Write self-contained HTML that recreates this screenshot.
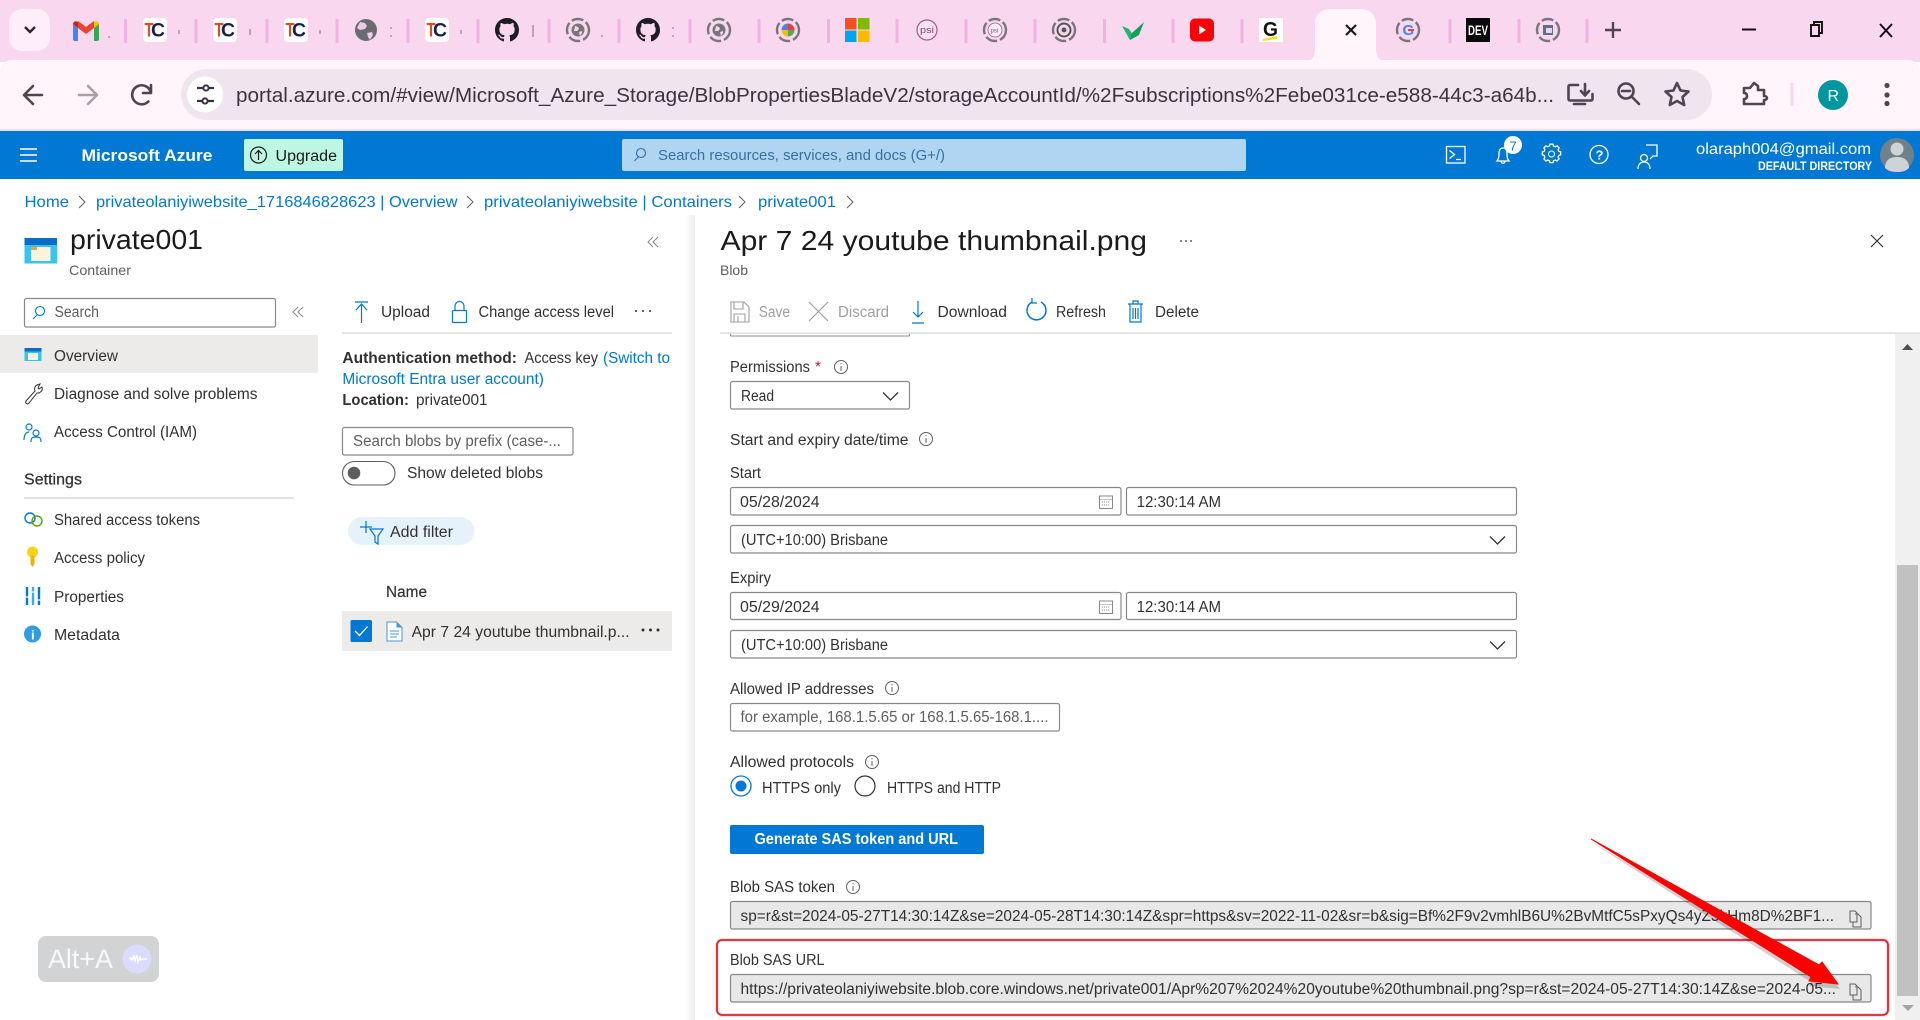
<!DOCTYPE html>
<html lang="en"><head><meta charset="utf-8"><title>Azure Portal</title>
<style>
html,body{margin:0;padding:0;width:1920px;height:1020px;overflow:hidden;background:#fff}
svg{display:block;font-family:"Liberation Sans",Arial,sans-serif}
text{white-space:pre}
.t{font-size:15.5px;fill:#323130}
.l{font-size:16px;fill:#0078d4}
.g{font-size:15.5px;fill:#605e5c}
.d{font-size:15.5px;fill:#a19f9d}
.b{font-size:15.5px;fill:#323130;font-weight:700}
.box{fill:#fff;stroke:#8a8886;stroke-width:1.2}
.ib{fill:none;stroke:#0078d4;stroke-width:1.2}
.ik{fill:none;stroke:#4f4450;stroke-width:2.6;stroke-linecap:round;stroke-linejoin:round}
.iw{fill:none;stroke:#fff;stroke-width:1.3}
.sep{stroke:#f2b1e3;stroke-width:3}
.ring{fill:none;stroke:#77777b;stroke-width:2.4;stroke-dasharray:12 3}
.info{fill:none;stroke:#605e5c;stroke-width:1}
.chev{fill:none;stroke:#323130;stroke-width:1.3}
</style></head><body>
<svg width="1920" height="1020" viewBox="0 0 1920 1020" xmlns="http://www.w3.org/2000/svg">
<rect width="1920" height="1020" fill="#fff"/>
<!-- tab strip -->
<rect width="1920" height="62" fill="#f8d7ef"/>
<rect x="9" y="9" width="41" height="42" rx="13" fill="#fdeef9"/>
<path d="M25 27l5 5 5-5" fill="none" stroke="#2d2530" stroke-width="2.4"/>
<!-- separators -->
<g class="sep"><path d="M125.500 19v24M196 19v24M267 19v24M337 19v24M408 19v24M478 19v24M549 19v24M619 19v24M690 19v24M759 19v24M828.500 19v24M897 19v24M966 19v24M1035 19v24M1104.500 19v24M1173 19v24M1242 19v24M1450 19v24M1519 19v24M1587 19v24"/></g>
<!-- tiny clipped tab marks -->
<path d="M109 36v2M179 30v4M250 29v6M320 30v4M391 27v2M391 35v2M461 30v4M533 25v12M602 35v2M673 27v2M673 35v2" stroke="#77707a" stroke-width="1"/>
<!-- gmail -->
<g transform="translate(73,19)">
<path d="M0 5v15a2 2 0 002 2h3V9z" fill="#4285f4"/><path d="M21 9v13h3a2 2 0 002-2V5z" fill="#34a853"/>
<path d="M5 9l8 6 8-6V2l-8 6-8-6z" fill="#ea4335"/><path d="M0 5a3 3 0 015-2v6z" fill="#c5221f"/><path d="M26 5a3 3 0 00-5-2v6z" fill="#fbbc04"/></g>
<!-- TC -->
<g font-weight="700" font-size="19">
<rect x="143" y="18" width="24" height="24" rx="4" fill="#fff"/><text x="144.500" y="36.500" fill="#e8481c" textLength="9" lengthAdjust="spacingAndGlyphs">T</text><text x="151" y="36.500" fill="#16204f" textLength="14" lengthAdjust="spacingAndGlyphs">C</text>
<rect x="213" y="18" width="24" height="24" rx="4" fill="#fff"/><text x="214.500" y="36.500" fill="#e8481c" textLength="9" lengthAdjust="spacingAndGlyphs">T</text><text x="221" y="36.500" fill="#16204f" textLength="14" lengthAdjust="spacingAndGlyphs">C</text>
<rect x="284" y="18" width="24" height="24" rx="4" fill="#fff"/><text x="285.500" y="36.500" fill="#e8481c" textLength="9" lengthAdjust="spacingAndGlyphs">T</text><text x="292" y="36.500" fill="#16204f" textLength="14" lengthAdjust="spacingAndGlyphs">C</text>
<rect x="425" y="18" width="24" height="24" rx="4" fill="#fff"/><text x="426.500" y="36.500" fill="#e8481c" textLength="9" lengthAdjust="spacingAndGlyphs">T</text><text x="433" y="36.500" fill="#16204f" textLength="14" lengthAdjust="spacingAndGlyphs">C</text>
</g>
<!-- globe -->
<circle cx="366" cy="30" r="11" fill="#6a6a70"/><path d="M360 22l5 1 2 3-2 3-5 1-3-2zM367 33l5-1 1 3-3 5-2-3z" fill="#f8d7ef" opacity=".9"/>
<!-- github -->
<path transform="translate(495,18) scale(1.5)" fill="#1b1f23" fill-rule="evenodd" d="M8 0C3.58 0 0 3.58 0 8c0 3.54 2.29 6.53 5.47 7.59.4.07.55-.17.55-.38 0-.19-.01-.82-.01-1.49-2.01.37-2.53-.49-2.69-.94-.09-.23-.48-.94-.82-1.13-.28-.15-.68-.52-.01-.53.63-.01 1.08.58 1.23.82.72 1.21 1.87.87 2.33.66.07-.52.28-.87.51-1.07-1.78-.2-3.64-.89-3.64-3.95 0-.87.31-1.59.82-2.15-.08-.2-.36-1.02.08-2.12 0 0 .67-.21 2.2.82.64-.18 1.32-.27 2-.27.68 0 1.36.09 2 .27 1.53-1.04 2.2-.82 2.2-.82.44 1.1.16 1.92.08 2.12.51.56.82 1.27.82 2.15 0 3.07-1.87 3.75-3.65 3.95.29.25.54.73.54 1.48 0 1.07-.01 1.93-.01 2.2 0 .21.15.46.55.38A8.013 8.013 0 0016 8c0-4.42-3.58-8-8-8z"/>
<path transform="translate(636,18) scale(1.5)" fill="#1b1f23" fill-rule="evenodd" d="M8 0C3.58 0 0 3.58 0 8c0 3.54 2.29 6.53 5.47 7.59.4.07.55-.17.55-.38 0-.19-.01-.82-.01-1.49-2.01.37-2.53-.49-2.69-.94-.09-.23-.48-.94-.82-1.13-.28-.15-.68-.52-.01-.53.63-.01 1.08.58 1.23.82.72 1.21 1.87.87 2.33.66.07-.52.28-.87.51-1.07-1.78-.2-3.64-.89-3.64-3.95 0-.87.31-1.59.82-2.15-.08-.2-.36-1.02.08-2.12 0 0 .67-.21 2.2.82.64-.18 1.32-.27 2-.27.68 0 1.36.09 2 .27 1.53-1.04 2.2-.82 2.2-.82.44 1.1.16 1.92.08 2.12.51.56.82 1.27.82 2.15 0 3.07-1.87 3.75-3.65 3.95.29.25.54.73.54 1.48 0 1.07-.01 1.93-.01 2.2 0 .21.15.46.55.38A8.013 8.013 0 0016 8c0-4.42-3.58-8-8-8z"/>
<!-- loading-ringed favicons -->
<circle cx="578" cy="30" r="11" class="ring"/><circle cx="578" cy="30" r="6.500" fill="#77777b"/><path d="M575 26l3 1 1 2-2 2-3 0zM579 32l3-1 0 2-2 3z" fill="#f8d7ef"/>
<circle cx="719" cy="30" r="11" class="ring"/><circle cx="719" cy="30" r="6.500" fill="#77777b"/><path d="M716 26l3 1 1 2-2 2-3 0zM720 32l3-1 0 2-2 3z" fill="#f8d7ef"/>
<circle cx="788" cy="30" r="11" class="ring"/><path d="M788 30V23.500a6.500 6.500 0 016.500 6.500z" fill="#ea4335"/><path d="M788 30h6.500a6.500 6.500 0 01-6.500 6.500z" fill="#4caf50"/><path d="M788 30v6.500a6.500 6.500 0 01-6.500-6.500z" fill="#fbbc04"/><path d="M788 30h-6.500a6.500 6.500 0 016.500-6.500z" fill="#4285f4"/>
<rect x="845" y="18" width="11.500" height="11.500" fill="#f25022"/><rect x="858" y="18" width="11.500" height="11.500" fill="#7fba00"/><rect x="845" y="30.500" width="11.500" height="11.500" fill="#00a4ef"/><rect x="858" y="30.500" width="11.500" height="11.500" fill="#ffb900"/>
<circle cx="927" cy="30" r="10" fill="#f8e3f2" stroke="#a8558f" stroke-width="1.200"/><text x="920" y="33" font-size="9" fill="#8a3a78" textLength="14" lengthAdjust="spacingAndGlyphs">psi</text>
<circle cx="995" cy="30" r="11" class="ring"/><circle cx="995" cy="30" r="7" fill="#fbeff8" stroke="#a8558f" stroke-width=".8"/><text x="990.500" y="32.500" font-size="6" fill="#8a3a78">psi</text>
<circle cx="1064" cy="30" r="11" class="ring"/><circle cx="1064" cy="30" r="6.500" fill="#f8d7ef" stroke="#55555a" stroke-width="2"/><circle cx="1064" cy="30" r="2.500" fill="#55555a"/>
<path d="M1122 26l7 3 4 6-3 5z" fill="#22b573"/><path d="M1130 40l2-7 12-11-5 13z" fill="#10a05a"/>
<rect x="1190" y="18.500" width="24" height="23" rx="5" fill="#ff0000"/><path d="M1199 25.500l7 4.500-7 4.500z" fill="#fff"/>
<rect x="1259" y="18" width="24" height="24" fill="#fff"/><text x="1263" y="36" font-size="20" font-weight="700" fill="#111" textLength="15" lengthAdjust="spacingAndGlyphs">G</text><path d="M1263 39l14-3v3l-14 2z" fill="#f5e11d"/>
<!-- active tab -->
<path d="M1303 62c8 0 12-4 12-14V24c0-9 6-15 15-15h31c9 0 15 6 15 15v24c0 10 4 14 12 14z" fill="#fff5fb"/>
<path d="M1346 25l10 10m0-10l-10 10" stroke="#1d1720" stroke-width="2.200" fill="none"/>
<circle cx="1408" cy="30" r="11" class="ring"/><text x="1402.500" y="35" font-size="15" font-weight="700" fill="#4285f4">G</text><path d="M1408 29h6v2h-6z" fill="#ea4335"/>
<rect x="1466" y="18" width="24" height="24" fill="#0a0a0a"/><text x="1468" y="35" font-size="13.500" font-weight="700" fill="#fff" textLength="20" lengthAdjust="spacingAndGlyphs">DEV</text>
<circle cx="1548" cy="30" r="11" class="ring"/><rect x="1543" y="25" width="10" height="10" fill="#5b6f8f"/><rect x="1546" y="28" width="6" height="5" fill="#e9d6ec"/>
<path d="M1613 22v16M1605 30h16" stroke="#4f4450" stroke-width="2.400"/>
<!-- window controls -->
<path d="M1742 29.500h14" stroke="#111" stroke-width="2"/>
<path d="M1811 25h8v11h-8zM1814 25v-3h8v11h-3" fill="none" stroke="#111" stroke-width="1.900"/>
<path d="M1880 24l12 13m0-13l-12 13" stroke="#111" stroke-width="2"/>
<!-- toolbar -->
<path d="M0 129V72a12 12 0 0112-12h1896a12 12 0 0112 12v57z" fill="#fff5fb"/>
<path d="M1303 62h100" stroke="#fff5fb" stroke-width="3"/>
<rect y="129" width="1920" height="2" fill="#f0dce8"/>
<rect x="181" y="69" width="1531" height="51" rx="25.500" fill="#efe5ee"/>
<circle cx="205" cy="94.500" r="18" fill="#fff"/>
<path d="M197 88h6M209 88h5M197 101h5M208 101h6" stroke="#3a3040" stroke-width="2.200"/><circle cx="206" cy="88" r="2.600" fill="none" stroke="#3a3040" stroke-width="2"/><circle cx="205" cy="101" r="2.600" fill="none" stroke="#3a3040" stroke-width="2"/>
<path d="M42 95H25M33 86l-9 9 9 9" class="ik"/>
<path d="M79 95h17M88 86l9 9-9 9" class="ik" style="stroke:#a9a0a8"/>
<path d="M151 93a9.500 9.500 0 10-2.600 8.500M151 85v8h-8" class="ik"/>
<text x="236" y="102" font-size="20.500" fill="#3b3340" textLength="1318" lengthAdjust="spacingAndGlyphs">portal.azure.com/#view/Microsoft_Azure_Storage/BlobPropertiesBladeV2/storageAccountId/%2Fsubscriptions%2Febe031ce-e588-44c3-a64b...</text>
<path d="M1578 85h-8a1.500 1.500 0 00-1.500 1.500V99a1.500 1.500 0 001.500 1.500h21a1.500 1.500 0 001.500-1.500v-5" class="ik"/><path d="M1574 104h11" class="ik"/><path d="M1585 84v11M1581 91l4 4.500 4-4.500" class="ik"/>
<circle cx="1626" cy="91" r="7.500" class="ik"/><path d="M1622 91h8M1632 97l7 7" class="ik"/>
<path d="M1677 83l3.500 7.500 8 1-6 5.500 1.700 8-7.200-4-7.200 4 1.700-8-6-5.500 8-1z" class="ik"/>
<path d="M1744 88h6l4-5 4 3v4h6v6c2 0 3 1 3 2s-1 2-3 2v4h-20v-5c2 0 3-1 3-3s-1-3-3-3z" class="ik"/>
<path d="M1792 83v23" stroke="#f8d7ef" stroke-width="3"/>
<circle cx="1833" cy="95" r="15" fill="#00969f"/><text x="1827.500" y="101" font-size="16" fill="#fff">R</text>
<circle cx="1887" cy="85.500" r="2.600" fill="#4f4450"/><circle cx="1887" cy="95" r="2.600" fill="#4f4450"/><circle cx="1887" cy="103.500" r="2.600" fill="#4f4450"/>
<!-- azure header -->
<rect y="131" width="1920" height="48" fill="#0078d4"/>
<path d="M20 149h17M20 155h17M20 161h17" stroke="#fff" stroke-width="1.500"/>
<text x="81.500" y="161" font-size="17" font-weight="700" fill="#fff" textLength="131" lengthAdjust="spacingAndGlyphs">Microsoft Azure</text>
<rect x="244" y="139" width="99" height="32" rx="2" fill="#bdf7e4"/>
<circle cx="258.500" cy="155" r="8" fill="none" stroke="#1b1a19" stroke-width="1.200"/><path d="M258.500 160v-9M255 154l3.500-3.500 3.500 3.500" fill="none" stroke="#1b1a19" stroke-width="1.200"/>
<text x="275.500" y="161" font-size="15.500" fill="#1b1a19" textLength="61.500" lengthAdjust="spacingAndGlyphs">Upgrade</text>
<rect x="622" y="139" width="624" height="32" rx="2" fill="#b0d5f2"/>
<circle cx="641" cy="153" r="4.500" fill="none" stroke="#2f6ea5" stroke-width="1.100"/><path d="M638 157l-3.500 4" stroke="#2f6ea5" stroke-width="1.100"/>
<text x="658" y="160" font-size="14.500" fill="#3a6f9d" textLength="287" lengthAdjust="spacingAndGlyphs">Search resources, services, and docs (G+/)</text>
<rect x="1446.500" y="146.500" width="18.500" height="16.500" class="iw"/><path d="M1449.500 150.500l5 4-5 4M1456 159.500h5" class="iw"/>
<path d="M1497 161c1-1 2-3 2-7 0-4 1-6 4-6s4 2 4 6c0 4 1 6 2 7zM1501 161c0 3 4 3 4 0" class="iw"/>
<circle cx="1513" cy="145" r="9" fill="#fff"/><text x="1509.500" y="150.500" font-size="13" fill="#0078d4">7</text>
<g transform="translate(1551.500,154) scale(.76) translate(-1551.500,-158)"><circle cx="1551.500" cy="158" r="4" class="iw" stroke-width="1.600"/><path d="M1549.500 145h4l.7 2.500 2.300 1 2.300-1.300 2.700 2.700-1.300 2.300 1 2.300 2.300.7v4l-2.300.7-1 2.300 1.300 2.300-2.700 2.700-2.300-1.300-2.300 1-.7 2.500h-4l-.7-2.500-2.300-1-2.300 1.300-2.700-2.700 1.300-2.300-1-2.300-2.300-.7v-4l2.300-.7 1-2.300-1.300-2.300 2.700-2.700 2.300 1.300 2.300-1z" class="iw" style="stroke-width:1.700"/></g>
<circle cx="1599" cy="154.500" r="9" class="iw"/><text x="1595.500" y="159.500" font-size="13" font-weight="700" fill="#fff">?</text>
<path d="M1646 145h11v11h-4l-3 3" class="iw"/><circle cx="1644" cy="158" r="3.500" class="iw"/><path d="M1638 169c0-4 2-7 6-7s6 3 6 7" class="iw"/>
<text x="1696" y="154" font-size="16" fill="#fff" textLength="175" lengthAdjust="spacingAndGlyphs">olaraph004@gmail.com</text>
<text x="1758" y="170" font-size="11.500" font-weight="700" fill="#fff" textLength="114" lengthAdjust="spacingAndGlyphs">DEFAULT DIRECTORY</text>
<circle cx="1897" cy="155" r="17" fill="#71818c"/><circle cx="1897" cy="149" r="6.500" fill="#cdd3d7"/><path d="M1885 168c0-8 5-11 12-11s12 3 12 11c-3 3-7 4-12 4s-9-1-12-4z" fill="#cdd3d7"/>
<!-- blade shadow -->
<defs><linearGradient id="sh" x1="0" x2="1"><stop offset="0" stop-color="#fff"/><stop offset="1" stop-color="#ececec"/></linearGradient></defs>
<rect x="685" y="215" width="10" height="805" fill="url(#sh)"/>
<!-- breadcrumb -->
<text x="24.500" y="207" class="l" textLength="44.500" lengthAdjust="spacingAndGlyphs">Home</text>
<path d="M79 196l6 6-6 6M467 196l6 6-6 6M739 196l6 6-6 6M847 196l6 6-6 6" fill="none" stroke="#605e5c" stroke-width="1"/>
<text x="96" y="207" class="l" textLength="361.500" lengthAdjust="spacingAndGlyphs">privateolaniyiwebsite_1716846828623 | Overview</text>
<text x="484" y="207" class="l" textLength="248" lengthAdjust="spacingAndGlyphs">privateolaniyiwebsite | Containers</text>
<text x="758" y="207" class="l" textLength="78" lengthAdjust="spacingAndGlyphs">private001</text>
<!-- left blade header -->
<rect x="24.500" y="238" width="32.500" height="25.500" fill="#32c6f0"/><rect x="24.500" y="238" width="32.500" height="7" fill="#0b6cc6"/><rect x="31" y="247" width="19.500" height="14" fill="#fff3dd"/><rect x="31" y="247" width="6" height="3" fill="#f0a030"/>
<text x="70" y="249" font-size="28" fill="#1b1a19" textLength="133" lengthAdjust="spacingAndGlyphs">private001</text>
<text x="69" y="275" font-size="14" fill="#605e5c" textLength="62" lengthAdjust="spacingAndGlyphs">Container</text>
<path d="M653 237l-5 5 5 5M658 237l-5 5 5 5" fill="none" stroke="#8a8886" stroke-width="1"/>
<!-- sidebar -->
<rect x="24.500" y="298.500" width="251" height="28.500" rx="2" class="box"/>
<circle cx="40" cy="311" r="4.500" fill="none" stroke="#0078d4" stroke-width="1.100"/><path d="M37 315l-4 4" stroke="#0078d4" stroke-width="1.100"/>
<text x="54.500" y="317" class="g" textLength="44.500" lengthAdjust="spacingAndGlyphs">Search</text>
<path d="M298 307l-5 5 5 5M303 307l-5 5 5 5" fill="none" stroke="#8a8886" stroke-width="1"/>
<rect y="335" width="318" height="38" fill="#edebe9"/>
<rect x="24.500" y="348" width="17" height="13" fill="#32c6f0"/><rect x="24.500" y="348" width="17" height="3.500" fill="#0b6cc6"/><rect x="28" y="353" width="10" height="7" fill="#fff3dd"/>
<text x="54" y="361" class="t" textLength="64" lengthAdjust="spacingAndGlyphs">Overview</text>
<path d="M26 401l9-10c-1-3 0-5 2-6l3-1-2 4 1 1 3-2c1 3-1 5-3 6l-2 0-8 10c-2 2-4 0-3-2z" fill="none" stroke="#323130" stroke-width="1"/>
<text x="54" y="399" class="t" textLength="203.500" lengthAdjust="spacingAndGlyphs">Diagnose and solve problems</text>
<circle cx="29" cy="427" r="3" class="ib"/><circle cx="36" cy="433" r="3" class="ib"/><path d="M24 440c0-5 2-8 5-8M31 442c0-4 1-5 5-5s5 1 5 5" class="ib"/>
<text x="54" y="437" class="t" textLength="143" lengthAdjust="spacingAndGlyphs">Access Control (IAM)</text>
<text x="24" y="484.500" font-size="15.500" stroke="#323130" stroke-width=".25" fill="#323130" textLength="58" lengthAdjust="spacingAndGlyphs">Settings</text>
<rect x="24" y="497.500" width="270" height="1" fill="#c8c6c4"/>
<circle cx="30" cy="518" r="5" fill="none" stroke="#0078d4" stroke-width="1.400"/><circle cx="37" cy="521" r="5" fill="none" stroke="#57a300" stroke-width="1.400"/>
<text x="54" y="525" class="t" textLength="146" lengthAdjust="spacingAndGlyphs">Shared access tokens</text>
<circle cx="32.500" cy="552" r="5.500" fill="#fcd116"/><path d="M30.500 556h4v8l-2 3-2-3z" fill="#f5b000"/>
<text x="54" y="563" class="t" textLength="91" lengthAdjust="spacingAndGlyphs">Access policy</text>
<path d="M27 587v18" stroke="#0078d4" stroke-width="2.400"/><path d="M33 587v18" stroke="#32b0ec" stroke-width="2.400"/><path d="M39 587v18" stroke="#0078d4" stroke-width="2.400"/><path d="M25 597h4M31 592h4M37 600h4" stroke="#fff" stroke-width="1.300"/>
<text x="54" y="602" class="t" textLength="70" lengthAdjust="spacingAndGlyphs">Properties</text>
<circle cx="32.500" cy="634" r="8.500" fill="#2f9ce6"/><text x="31" y="639.500" font-size="13" font-weight="700" fill="#fff">i</text>
<text x="54" y="640" class="t" textLength="66" lengthAdjust="spacingAndGlyphs">Metadata</text>
<!-- middle column -->
<path d="M355 302h13M361.500 323v-19M356 310l5.500-6 5.500 6" fill="none" stroke="#0078d4" stroke-width="1.200"/>
<text x="381" y="317" class="t" textLength="49" lengthAdjust="spacingAndGlyphs">Upload</text>
<rect x="452.500" y="310.500" width="14" height="12" rx="1" class="ib"/><path d="M455 310v-4a4.500 4.500 0 019 0v4" class="ib"/>
<text x="478.500" y="317" class="t" textLength="135.500" lengthAdjust="spacingAndGlyphs">Change access level</text>
<circle cx="636" cy="311" r="1" fill="#323130"/><circle cx="643" cy="311" r="1" fill="#323130"/><circle cx="650" cy="311" r="1" fill="#323130"/>
<rect x="342" y="332.500" width="330" height="1.200" fill="#d6d6d6"/>
<text x="342.400" y="363" class="b" textLength="174.500" lengthAdjust="spacingAndGlyphs">Authentication method:</text>
<text x="524.500" y="363" class="t" textLength="73.500" lengthAdjust="spacingAndGlyphs">Access key</text>
<text x="603" y="363" font-size="15.500" fill="#0078d4" textLength="67" lengthAdjust="spacingAndGlyphs">(Switch to</text>
<text x="342.400" y="384" font-size="15.500" fill="#0078d4" textLength="201.500" lengthAdjust="spacingAndGlyphs">Microsoft Entra user account)</text>
<text x="342.400" y="405" class="b" textLength="66.500" lengthAdjust="spacingAndGlyphs">Location:</text>
<text x="416" y="405" class="t" textLength="71.500" lengthAdjust="spacingAndGlyphs">private001</text>
<rect x="342.500" y="427.500" width="230.500" height="27.500" rx="2" class="box"/>
<text x="353" y="446" class="g" textLength="208" lengthAdjust="spacingAndGlyphs">Search blobs by prefix (case-...</text>
<rect x="342.500" y="461.500" width="52.500" height="23.500" rx="11.750" fill="#fff" stroke="#605e5c" stroke-width="1.100"/><circle cx="354" cy="473" r="6.300" fill="#605e5c"/>
<text x="407" y="478" class="t" textLength="136" lengthAdjust="spacingAndGlyphs">Show deleted blobs</text>
<rect x="348" y="517" width="126.500" height="28" rx="14" fill="#e6f2fb"/>
<path d="M366 521v12M360 527h12" stroke="#0078d4" stroke-width="1.200"/><path d="M370 529h13l-5 7v8l-3-2v-6z" fill="none" stroke="#0078d4" stroke-width="1.200"/>
<text x="390" y="537" class="t" textLength="63" lengthAdjust="spacingAndGlyphs">Add filter</text>
<text x="386" y="597" font-size="15.500" fill="#323130" stroke="#323130" stroke-width=".2" textLength="41" lengthAdjust="spacingAndGlyphs">Name</text>
<rect x="342" y="611" width="330" height="40" fill="#edebe9"/>
<rect x="350.500" y="620" width="21.500" height="22" rx="1.500" fill="#0078d4"/><path d="M355 631l4.500 4.500 8-9" fill="none" stroke="#fff" stroke-width="1.300"/>
<path d="M387 622h9.500l5.500 5.500V641h-15z" fill="#fff" stroke="#4a95d6" stroke-width="1"/><path d="M396.500 622v5.500h5.500z" fill="#4a95d6"/><path d="M390 631h9M390 634h9M390 637h7" stroke="#4a95d6" stroke-width="1"/>
<text x="411.600" y="637" class="t" textLength="218" lengthAdjust="spacingAndGlyphs">Apr 7 24 youtube thumbnail.p...</text>
<circle cx="643" cy="630" r="1.500" fill="#323130"/><circle cx="650.500" cy="630" r="1.500" fill="#323130"/><circle cx="658" cy="630" r="1.500" fill="#323130"/>
<!-- right blade header -->
<text x="720.500" y="250" font-size="28" fill="#1b1a19" textLength="426.500" lengthAdjust="spacingAndGlyphs">Apr 7 24 youtube thumbnail.png</text>
<circle cx="1181" cy="241" r=".9" fill="#323130"/><circle cx="1186" cy="241" r=".9" fill="#323130"/><circle cx="1191" cy="241" r=".9" fill="#323130"/>
<path d="M1871 235l12 12m0-12l-12 12" stroke="#323130" stroke-width="1.200"/>
<text x="720" y="275" font-size="14" fill="#605e5c" textLength="28" lengthAdjust="spacingAndGlyphs">Blob</text>
<!-- right toolbar -->
<path d="M731 302h13l5 5v15h-18zM734 302v7h9v-7M734 322v-8h11v8M738 316v6" fill="none" stroke="#a19f9d" stroke-width="1.100"/>
<text x="758.700" y="317" class="d" textLength="31.300" lengthAdjust="spacingAndGlyphs">Save</text>
<path d="M809 302l19 19m0-19l-19 19" stroke="#a19f9d" stroke-width="1.200"/>
<text x="838" y="317" class="d" textLength="51" lengthAdjust="spacingAndGlyphs">Discard</text>
<path d="M918 301v16M913 312l5 5 5-5M912 323h12" fill="none" stroke="#0078d4" stroke-width="1.200"/>
<text x="937.500" y="317" class="t" textLength="69.500" lengthAdjust="spacingAndGlyphs">Download</text>
<path d="M1032 302a9.500 9.500 0 10 9 0" fill="none" stroke="#0078d4" stroke-width="1.500"/><path d="M1032 298v5h5" fill="none" stroke="#0078d4" stroke-width="1.300"/>
<text x="1056" y="317" class="t" textLength="50" lengthAdjust="spacingAndGlyphs">Refresh</text>
<path d="M1128 304h15M1133 304v-3h5v3M1130 304v18h11v-18M1133 308v11M1135.500 308v11M1138 308v11" fill="none" stroke="#0078d4" stroke-width="1.200"/>
<text x="1155" y="317" class="t" textLength="44" lengthAdjust="spacingAndGlyphs">Delete</text>
<rect x="730" y="333.500" width="180" height="3" rx="1" fill="#8a8886"/><rect x="731" y="333.500" width="178" height="2" fill="#fff"/>
<rect x="720" y="332.500" width="1200" height="1.200" fill="#d6d6d6"/>
<!-- form -->
<text x="730" y="372" class="t" textLength="80" lengthAdjust="spacingAndGlyphs">Permissions</text>
<text x="815" y="372" font-size="15.500" fill="#a4262c">*</text>
<circle cx="841" cy="367" r="6.500" class="info"/><path d="M841 366v5M841 363v1.300" stroke="#605e5c" stroke-width="1"/>
<rect x="730.500" y="381.500" width="179" height="27.500" rx="2" class="box"/>
<text x="741" y="401" class="t" textLength="33" lengthAdjust="spacingAndGlyphs">Read</text>
<path d="M883 392.500l7.500 7.500 7.500-7.500" class="chev"/>
<text x="730" y="445" class="t" textLength="178.500" lengthAdjust="spacingAndGlyphs">Start and expiry date/time</text>
<circle cx="926" cy="439" r="6.500" class="info"/><path d="M926 438v5M926 435v1.300" stroke="#605e5c" stroke-width="1"/>
<text x="730" y="478" class="t" textLength="31" lengthAdjust="spacingAndGlyphs">Start</text>
<rect x="730.500" y="487.500" width="390.500" height="27.500" rx="2" class="box"/>
<text x="740" y="507" class="t" textLength="79.600" lengthAdjust="spacingAndGlyphs">05/28/2024</text>
<rect x="1099.500" y="496" width="13" height="12.500" fill="none" stroke="#8a8886"/><path d="M1099.500 499.500h13M1102 502h8M1102 505h8" stroke="#8a8886" stroke-dasharray="1 1"/>
<rect x="1126.500" y="487.500" width="390" height="27.500" rx="2" class="box"/>
<text x="1136.600" y="507" class="t" textLength="84.400" lengthAdjust="spacingAndGlyphs">12:30:14 AM</text>
<rect x="730.500" y="525.500" width="786" height="27.500" rx="2" class="box"/>
<text x="741" y="545" class="t" textLength="147" lengthAdjust="spacingAndGlyphs">(UTC+10:00) Brisbane</text>
<path d="M1490 536.500l7.500 7.500 7.500-7.500" class="chev"/>
<text x="730" y="583" class="t" textLength="41" lengthAdjust="spacingAndGlyphs">Expiry</text>
<rect x="730.500" y="592.500" width="390.500" height="27" rx="2" class="box"/>
<text x="740" y="612" class="t" textLength="79.600" lengthAdjust="spacingAndGlyphs">05/29/2024</text>
<rect x="1099.500" y="601" width="13" height="12.500" fill="none" stroke="#8a8886"/><path d="M1099.500 604.500h13M1102 607h8M1102 610h8" stroke="#8a8886" stroke-dasharray="1 1"/>
<rect x="1126.500" y="592.500" width="390" height="27" rx="2" class="box"/>
<text x="1136.600" y="612" class="t" textLength="84.400" lengthAdjust="spacingAndGlyphs">12:30:14 AM</text>
<rect x="730.500" y="630.500" width="786" height="27.500" rx="2" class="box"/>
<text x="741" y="650" class="t" textLength="147" lengthAdjust="spacingAndGlyphs">(UTC+10:00) Brisbane</text>
<path d="M1490 641.500l7.500 7.500 7.500-7.500" class="chev"/>
<text x="730" y="694" class="t" textLength="144" lengthAdjust="spacingAndGlyphs">Allowed IP addresses</text>
<circle cx="892" cy="688" r="6.500" class="info"/><path d="M892 687v5M892 684v1.300" stroke="#605e5c" stroke-width="1"/>
<rect x="730.500" y="703.500" width="329" height="27.500" rx="2" class="box"/>
<text x="740.500" y="722" class="g" textLength="308" lengthAdjust="spacingAndGlyphs">for example, 168.1.5.65 or 168.1.5.65-168.1....</text>
<text x="730" y="767" class="t" textLength="124" lengthAdjust="spacingAndGlyphs">Allowed protocols</text>
<circle cx="872" cy="762" r="6.500" class="info"/><path d="M872 761v5M872 758v1.300" stroke="#605e5c" stroke-width="1"/>
<circle cx="741" cy="786" r="10" fill="#fff" stroke="#0078d4" stroke-width="1.300"/><circle cx="741" cy="786" r="5.500" fill="#0078d4"/>
<text x="762" y="793" class="t" textLength="79" lengthAdjust="spacingAndGlyphs">HTTPS only</text>
<circle cx="865" cy="786" r="10" fill="#fff" stroke="#323130" stroke-width="1.200"/>
<text x="887" y="793" class="t" textLength="114" lengthAdjust="spacingAndGlyphs">HTTPS and HTTP</text>
<rect x="730" y="825" width="254" height="29" rx="2" fill="#0078d4"/>
<text x="754.500" y="844" font-size="15.500" font-weight="700" fill="#fff" textLength="203.500" lengthAdjust="spacingAndGlyphs">Generate SAS token and URL</text>
<text x="730" y="892" class="t" textLength="105" lengthAdjust="spacingAndGlyphs">Blob SAS token</text>
<circle cx="853" cy="887" r="6.500" class="info"/><path d="M853 886v5M853 883v1.300" stroke="#605e5c" stroke-width="1"/>
<rect x="730.500" y="901.500" width="1140.500" height="27.500" rx="2" fill="#e8e8e8" stroke="#8a8886" stroke-width="1.200"/>
<text x="740.500" y="921" class="t" font-size="15" textLength="1093.500" lengthAdjust="spacingAndGlyphs">sp=r&amp;st=2024-05-27T14:30:14Z&amp;se=2024-05-28T14:30:14Z&amp;spr=https&amp;sv=2022-11-02&amp;sr=b&amp;sig=Bf%2F9v2vmhlB6U%2BvMtfC5sPxyQs4yZ5kHm8D%2BF1...</text>
<path d="M1850 911h5l2 2v9h-7zM1855 914h3l3 3v10h-8v-5" fill="#e8e8e8" stroke="#605e5c" stroke-width="1"/>
<!-- red box -->
<rect x="717" y="940" width="1171" height="75" rx="5" fill="none" stroke="#b8b8b8" stroke-width="4" opacity=".35"/>
<rect x="717" y="940" width="1171" height="75" rx="5" fill="none" stroke="#ee1c25" stroke-width="1.800"/>
<text x="730" y="965" class="t" textLength="94.500" lengthAdjust="spacingAndGlyphs">Blob SAS URL</text>
<rect x="730.500" y="974.500" width="1140.500" height="27.500" rx="2" fill="#e8e8e8" stroke="#8a8886" stroke-width="1.200"/>
<text x="740.500" y="994" class="t" font-size="15" textLength="1095.500" lengthAdjust="spacingAndGlyphs">https://privateolaniyiwebsite.blob.core.windows.net/private001/Apr%207%2024%20youtube%20thumbnail.png?sp=r&amp;st=2024-05-27T14:30:14Z&amp;se=2024-05...</text>
<path d="M1850 984h5l2 2v9h-7zM1855 987h3l3 3v10h-8v-5" fill="#e8e8e8" stroke="#605e5c" stroke-width="1"/>
<!-- scrollbar -->
<rect x="1895" y="334" width="25" height="686" fill="#f0f0f0"/>
<rect x="1897" y="565" width="21" height="431" fill="#c1c1c1"/>
<path d="M1902 350h11l-5.500-6z" fill="#505050"/><path d="M1902 1005h12l-6 6z" fill="#a3a3a3"/>
<!-- red arrow -->
<path d="M1591 839L1811 979 1809 983 1840 986 1824 964 1820 969z" fill="#000" opacity=".18" transform="translate(0,3)"/>
<path d="M1591 839L1811 977 1809 981 1838 984 1822 962 1819 965z" fill="#ff0000" stroke="#ff0000" stroke-width="1"/>
<!-- Alt+A -->
<rect x="38" y="936" width="121" height="46" rx="8" fill="#d2d3d5"/>
<text x="48" y="968" font-size="27" fill="#f8f8f8" textLength="65" lengthAdjust="spacingAndGlyphs">Alt+A</text>
<circle cx="137" cy="959" r="14.500" fill="#d9dbff"/><path d="M129 959l2-1 1 2 2-4 1 5 2-6 1 7 2-5 1 3 2-1h4" fill="none" stroke="#fff" stroke-width="1.400"/>
</svg>
</body></html>
